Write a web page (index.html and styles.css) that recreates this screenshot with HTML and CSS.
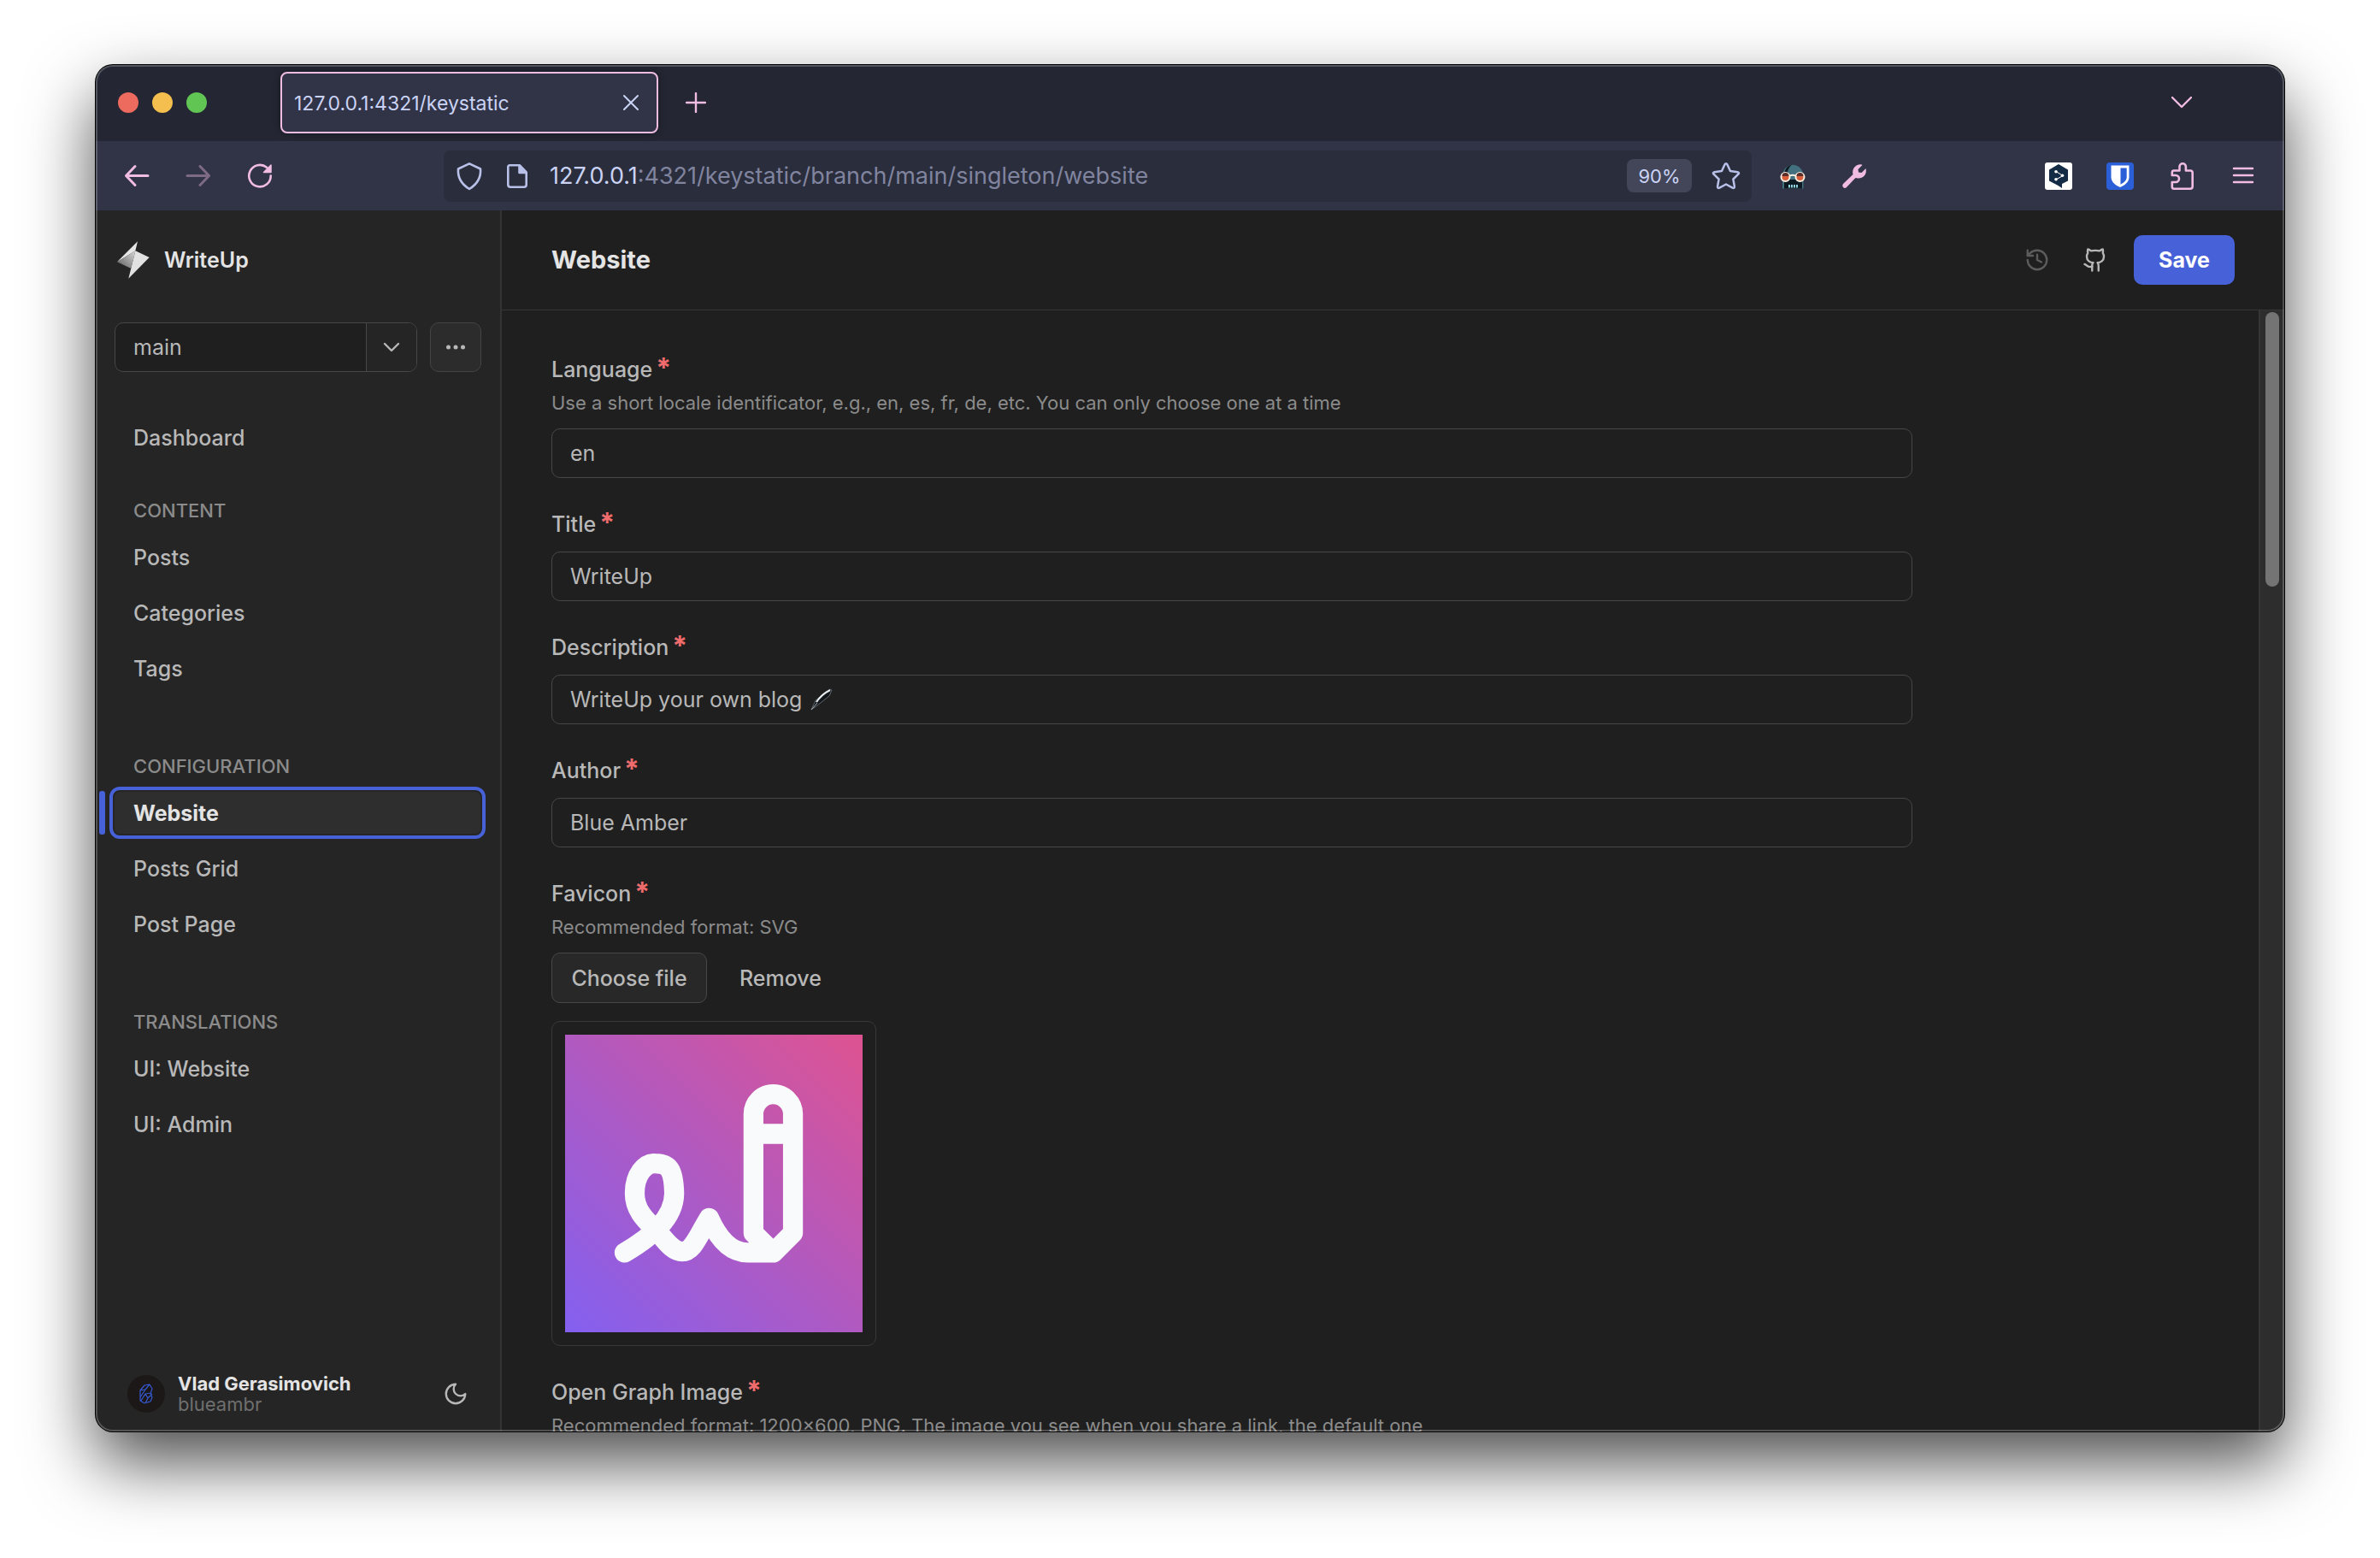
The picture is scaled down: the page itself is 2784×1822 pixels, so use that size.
FILE: index.html
```html
<!DOCTYPE html>
<html lang="en">
<head>
<meta charset="utf-8">
<title>Website - Keystatic</title>
<link rel="stylesheet" href="styles.css">
</head>
<body>
<div class="window">
  <header class="tabstrip">
    <div class="lights"><span class="light red"></span><span class="light yellow"></span><span class="light green"></span></div>
    <div class="tab">
      <span class="tab-title">127.0.0.1:4321/keystatic</span>
      <button class="plain" aria-label="Close tab"><svg width="20" height="20" viewBox="0 0 20 20" fill="none" stroke="#cad3f5" stroke-width="2" stroke-linecap="round"><path d="M2 2l16 16M18 2L2 18"/></svg></button>
    </div>
    <button class="plain pink new-tab" aria-label="New tab"><svg width="24" height="24" viewBox="0 0 24 24" fill="none" stroke="currentColor" stroke-width="2.4" stroke-linecap="round"><path d="M12 1v22M1 12h22"/></svg></button>
    <button class="plain pink tab-list" aria-label="List all tabs"><svg width="24" height="16" viewBox="0 0 24 16" fill="none" stroke="currentColor" stroke-width="2.4" stroke-linecap="round" stroke-linejoin="round"><path d="M1 2l11 11L23 2"/></svg></button>
  </header>

  <div class="toolbar">
    <div class="tools pink">
      <button class="plain" aria-label="Back"><svg width="32" height="32" viewBox="0 0 32 32" fill="none" stroke="currentColor" stroke-width="3" stroke-linecap="round" stroke-linejoin="round"><path d="M14 4.500L3.500 15.500l10.500 11M3.500 15.500h25.500"/></svg></button>
      <button class="plain dim" aria-label="Forward"><svg width="32" height="32" viewBox="0 0 32 32" fill="none" stroke="currentColor" stroke-width="3" stroke-linecap="round" stroke-linejoin="round"><path d="M18 4.500l10.500 11-10.500 11M28.500 15.500H3"/></svg></button>
      <button class="plain" aria-label="Reload"><svg width="32" height="32" viewBox="0 0 32 32" fill="none" stroke="currentColor" stroke-width="2.6" stroke-linecap="round"><path d="M28.700 15.500A12.700 12.700 0 1 1 24 5.800"/><path d="M29 3v8.500h-8.500z" fill="currentColor" stroke-width="1.500" stroke-linejoin="round"/></svg></button>
    </div>
    <div class="urlbar">
      <svg width="32" height="34" viewBox="0 0 32 34" fill="none" stroke="#b8c0e8" stroke-width="2.6" stroke-linejoin="round"><path d="M16 2.300L29 8.500c.8 9-2.500 17-13 23.500C5.500 25.500 2.200 17.500 3 8.500z"/></svg>
      <svg width="32" height="30" viewBox="-4 0 32 30" fill="none" stroke="#b8c0e8" stroke-width="2.600" stroke-linejoin="round"><path d="M4 2.300h12l7.700 8V25a2.700 2.700 0 0 1-2.700 2.700H5A2.700 2.700 0 0 1 2.300 25V4A1.700 1.700 0 0 1 4 2.300z"/><path d="M15.500 3v8H23z" fill="#b8c0e8"/></svg>
      <span class="url"><span class="host">127.0.0.1</span>:4321/keystatic/branch/main/singleton/website</span>
      <button class="zoom">90%</button>
      <button class="plain" aria-label="Bookmark"><svg width="34" height="34" viewBox="0 0 34 34" fill="none" stroke="#b8c0e8" stroke-width="2.500" stroke-linejoin="round"><path d="M15.500 3.500q1.500-2.500 3 0l3.500 7.600 8.500 1.100q2.500.6.900 2.500l-6 5.800 1.500 8.500q.1 2.600-2.300 1.600L17 26.500l-7.600 4.100q-2.400 1-2.300-1.600l1.500-8.500-6-5.800q-1.600-1.900.9-2.500l8.500-1.100z"/></svg></button>
    </div>
    <div class="tools">
      <button class="plain" aria-label="Skull extension"><svg width="32" height="32" viewBox="0 0 32 32"><path d="M4 30.500V15A12.300 13.500 0 0 1 28.500 15v15.500z" fill="#42707f"/><path d="M6.500 12C7.500 7 10 4 15 2.500c-4 4-5 7-5 10zM6 20h21v10.500H6z" fill="#0e1a22"/><circle cx="7.500" cy="17" r="5" fill="#d8603c" stroke="#fff1e4" stroke-width="2"/><circle cx="24.500" cy="17" r="5" fill="#d8603c" stroke="#fff1e4" stroke-width="2"/><path d="M3.500 16A4 4 0 0 1 11.500 16zM20.500 16a4 4 0 0 1 8 0z" fill="#5a2f2b"/><path d="M12.500 15.500q3.500-1.500 7 0" fill="none" stroke="#fff1e4" stroke-width="1.800"/><path d="M12 26v3.500M15 26v3.500M18 26v3.500M21 26v3.500" stroke="#8fd0dc" stroke-width="2"/></svg></button>
      <button class="plain pink" aria-label="Developer tools"><svg width="32" height="32" viewBox="0 0 32 32"><path d="M3 29a3 3 0 0 1 0-4L14.500 14C13 8 17 2 24 2.300l1.500.6-5 5 .5 3.500 3.500.5 5-5c1.800 6-2.500 12-9.500 11.500L17.500 18 7 29a3 3 0 0 1-4 0z" fill="currentColor"/></svg></button>
    </div>
    <div class="tools extensions">
      <button class="plain" aria-label="DeepL"><svg width="32" height="32" viewBox="0 0 32 32"><rect width="32" height="32" rx="3" fill="#fff"/><path d="M16 2l11 6.500v13L20 25v5l-4.500-3L5 21.500v-13z" fill="#142b45"/><path d="M13 10.500l8 5-8 4.500" fill="none" stroke="#fff" stroke-width="1"/><circle cx="13" cy="10.800" r="1.800" fill="#fff"/><circle cx="20.500" cy="15.300" r="1.800" fill="#fff"/><circle cx="13" cy="19.800" r="1.800" fill="#fff"/></svg></button>
      <button class="plain" aria-label="Bitwarden"><svg width="32" height="32" viewBox="0 0 32 32"><rect width="32" height="32" rx="4" fill="#2b5fd8"/><path d="M5.500 3.500h21V17c0 6-5 9.500-10.500 12C10.500 26.500 5.500 23 5.500 17z" fill="#fff"/><path d="M16.500 6.500h7.200V17c0 4-3.200 6.500-7.200 8.700z" fill="#2b5fd8"/></svg></button>
      <button class="plain pink" aria-label="Extensions"><svg width="32" height="32" viewBox="-1 0 32 32" fill="none" stroke="currentColor" stroke-width="2.600" stroke-linejoin="round"><path d="M5.500 9.500h7V5a3.700 3.700 0 0 1 7.400 0v4.500H25a2.700 2.700 0 0 1 2.700 2.700V28a2.700 2.700 0 0 1-2.700 2.700H6A2.200 2.200 0 0 1 3.800 28.500V23H8a4 4 0 0 0 0-8H3.800v-3.500a2 2 0 0 1 1.700-2z"/></svg></button>
      <button class="plain pink" aria-label="Menu"><svg width="32" height="32" viewBox="0 0 32 32" fill="none" stroke="currentColor" stroke-width="2.400" stroke-linecap="round"><path d="M5 7h22M5 15h22M5 23h22"/></svg></button>
    </div>
  </div>

  <div class="app">
    <aside class="sidebar">
      <a class="brand" href="#"><svg width="40" height="44" viewBox="50 336 116 132"><defs><linearGradient id="facet" x1="0" y1="1" x2="1" y2="0"><stop offset="0" stop-color="#5a5a5a"/><stop offset="1" stop-color="#d8d8d8"/></linearGradient></defs><path d="M123 337l-8 33-64 39z" fill="#e6e6e6"/><path d="M115 370l49 23-73 74z" fill="#e2e2e2"/><path d="M115 370l-15 62-49-23z" fill="url(#facet)"/></svg><span>WriteUp</span></a>
      <div class="branch">
        <div class="combo">
          <input class="combo-input" type="text" value="main" aria-label="Branch">
          <button class="combo-button" aria-label="Show branches"><svg width="20" height="12" viewBox="0 0 20 12" fill="none" stroke="currentColor" stroke-width="2.400" stroke-linecap="round" stroke-linejoin="round"><path d="M2 2l8 8 8-8"/></svg></button>
        </div>
        <button class="more" aria-label="Branch actions"><svg width="24" height="6" viewBox="0 0 24 6" fill="currentColor"><circle cx="3.500" cy="3" r="2.500"/><circle cx="12" cy="3" r="2.500"/><circle cx="20.500" cy="3" r="2.500"/></svg></button>
      </div>
      <nav class="nav">
        <a class="nav-item" href="#">Dashboard</a>
        <section class="nav-group first">
          <h2 class="nav-heading">CONTENT</h2>
          <a class="nav-item" href="#">Posts</a>
          <a class="nav-item" href="#">Categories</a>
          <a class="nav-item" href="#">Tags</a>
        </section>
        <section class="nav-group">
          <h2 class="nav-heading">CONFIGURATION</h2>
          <a class="nav-item current" href="#" aria-current="page">Website</a>
          <a class="nav-item" href="#">Posts Grid</a>
          <a class="nav-item" href="#">Post Page</a>
        </section>
        <section class="nav-group">
          <h2 class="nav-heading">TRANSLATIONS</h2>
          <a class="nav-item" href="#">UI: Website</a>
          <a class="nav-item" href="#">UI: Admin</a>
        </section>
      </nav>
      <footer class="user">
        <svg width="44" height="44" viewBox="0 0 44 44"><circle cx="22" cy="22" r="22" fill="#1b1817"/><path d="M15 18l5-6 6-1 3 5-2 6 2 4-2 5-7 2-5-3zM15 18l6-1 5-6M21 17l-6 9M16 30l5-8 6-1M21 22l3 5-3 6M24 27l5-5" fill="none" stroke="#3558d0" stroke-width="1.200" stroke-linejoin="round"/></svg>
        <div class="user-text"><strong class="user-name">Vlad Gerasimovich</strong><span class="user-login">blueambr</span></div>
        <button class="plain theme" aria-label="Theme"><svg width="30" height="30" viewBox="0 0 24 24" fill="none" stroke="currentColor" stroke-width="1.900" stroke-linecap="round" stroke-linejoin="round"><path d="M12 3a6 6 0 0 0 9 9 9 9 0 1 1-9-9z"/></svg></button>
      </footer>
    </aside>

    <main class="main">
      <header class="main-header">
        <h1 class="title">Website</h1>
        <button class="plain faded" aria-label="Reset"><svg width="30" height="30" viewBox="0 0 24 24" fill="none" stroke="currentColor" stroke-width="1.900" stroke-linecap="round" stroke-linejoin="round"><path d="M3 12a9 9 0 1 0 9-9 9.750 9.750 0 0 0-6.740 2.740L3 8"/><path d="M3 3v5h5M12 7v5l4 2"/></svg></button>
        <button class="plain github" aria-label="View on GitHub"><svg width="30" height="30" viewBox="0 0 24 24" fill="none" stroke="currentColor" stroke-width="1.900" stroke-linecap="round" stroke-linejoin="round"><path d="M15 22v-4a4.800 4.800 0 0 0-1-3.500c3 0 6-2 6-5.500.08-1.250-.27-2.480-1-3.500.28-1.150.28-2.350 0-3.500 0 0-1 0-3 1.500-2.640-.5-5.360-.5-8 0C6 2 5 2 5 2c-.3 1.150-.3 2.350 0 3.500A5.403 5.403 0 0 0 4 9c0 3.500 3 5.500 6 5.500-.39.490-.68 1.050-.85 1.650-.17.600-.22 1.230-.15 1.850v4"/><path d="M9 18c-4.510 2-5-2-7-2"/></svg></button>
        <button class="save">Save</button>
      </header>
      <div class="scroller">
        <form class="form">
          <div class="field">
            <div class="caption"><label for="language">Language<span class="star">*</span></label><p class="hint">Use a short locale identificator, e.g., en, es, fr, de, etc. You can only choose one at a time</p></div>
            <input class="input" id="language" type="text" value="en">
          </div>
          <div class="field">
            <div class="caption"><label for="title">Title<span class="star">*</span></label></div>
            <input class="input" id="title" type="text" value="WriteUp">
          </div>
          <div class="field">
            <div class="caption"><label for="description">Description<span class="star">*</span></label></div>
            <div class="input-wrap">
              <input class="input" id="description" type="text" value="WriteUp your own blog">
              <svg class="pen" width="28" height="28" viewBox="0 0 28 28"><path d="M2 26L7 15 24 2l2 1-3 7L9 21z" fill="#14181c" stroke="#5d646b" stroke-width="1"/><path d="M8 17Q14 8 24 3" fill="none" stroke="#e8eef2" stroke-width="2"/><path d="M2 26l7-8" stroke="#a9b0b5" stroke-width="1"/></svg>
            </div>
          </div>
          <div class="field">
            <div class="caption"><label for="author">Author<span class="star">*</span></label></div>
            <input class="input" id="author" type="text" value="Blue Amber">
          </div>
          <div class="field">
            <div class="caption"><label for="favicon">Favicon<span class="star">*</span></label><p class="hint">Recommended format: SVG</p></div>
            <div class="actions"><button class="choose" id="favicon" type="button">Choose file</button><button class="remove" type="button">Remove</button></div>
            <div class="preview">
              <svg viewBox="120 87 1047 1047"><defs><linearGradient id="bg" x1="0" y1="1" x2="1" y2="0"><stop offset="0" stop-color="#8360f0"/><stop offset="1" stop-color="#de5391"/></linearGradient></defs><rect x="120" y="87" width="1047" height="1047" fill="url(#bg)"/><path fill="none" stroke="#f9fafc" stroke-width="70" stroke-linecap="round" stroke-linejoin="round" d="M329 854C420 800 504 735 504 645C502 560 485 540 437 540C400 538 365 580 365 645C365 720 425 755 460 797C485 827 505 850 532 850C570 850 585 800 627 732C655 795 695 854 763 854H853L922 785V366A69.500 69.500 0 0 0 783 366V785L853 854M783 436H922"/></svg>
            </div>
          </div>
          <div class="field">
            <div class="caption"><label for="og">Open Graph Image<span class="star">*</span></label><p class="hint">Recommended format: 1200×600, PNG. The image you see when you share a link, the default one</p></div>
          </div>
        </form>
        <div class="track"><div class="thumb"></div></div>
      </div>
    </main>
  </div>
</div>
</body>
</html>
```

FILE: styles.css
```css
* { box-sizing: border-box; }

body {
  margin: 0;
  height: 100vh;
  padding: 76px 112px 148px;
  background: #fff;
  font-family: Inter, "Liberation Sans", sans-serif;
  font-size: 25px;
  line-height: 32px;
  color: #b8b8b8;
}

svg { display: block; flex: none; }
button, input { font: inherit; color: inherit; margin: 0; }
a { color: inherit; text-decoration: none; }
h1, h2, p { margin: 0; font-size: inherit; font-weight: inherit; }

.plain { display: flex; padding: 0; border: 0; background: none; }
.pink { color: #f0bce2; }
.dim { opacity: 0.4; }

.window {
  position: relative;
  display: flex;
  flex-direction: column;
  height: 100%;
  overflow: hidden;
  border-radius: 20px;
  background: #1f1f1f;
  box-shadow: 0 0 0 1px #000, 0 36px 80px rgba(0, 0, 0, 0.7);
}
.window::after {
  content: "";
  position: absolute;
  inset: 0;
  border-radius: 20px;
  box-shadow: inset 0 0 0 2px rgba(255, 255, 255, 0.22);
  pointer-events: none;
}

.tabstrip {
  display: flex;
  align-items: center;
  flex: none;
  height: 89px;
  padding: 0 108px 2px 26px;
  background: #242733;
}
.lights { display: flex; gap: 16px; }
.light { width: 24px; height: 24px; border-radius: 50%; }
.red { background: #ed6a5e; }
.yellow { background: #f5bf4f; }
.green { background: #61c554; }
.tab {
  display: flex;
  align-items: center;
  justify-content: space-between;
  width: 442px;
  height: 72px;
  margin: 0 32px 0 86px;
  padding: 0 20px 0 14px;
  border: 2px solid #f0bce2;
  border-radius: 8px;
  background: #313446;
  box-shadow: 0 0 8px rgba(0, 0, 0, 0.4);
  color: #cad3f5;
}
.tab-title { padding-top: 3px; font-size: 23px; }
.tab-list { margin-left: auto; }

.toolbar {
  display: flex;
  align-items: center;
  flex: none;
  height: 81px;
  padding: 0 32px;
  background: #313446;
}
.tools { display: flex; gap: 40px; }
.urlbar {
  display: flex;
  align-items: center;
  flex: 1;
  height: 60px;
  margin: 0 32px 0 199px;
  padding: 0 13px 0 14px;
  border-radius: 8px;
  background: #2a2d3c;
  gap: 23px;
}
.url { flex: 1; color: #80849f; font-size: 27px; }
.host { color: #cad3f5; }
.zoom {
  width: 76px;
  height: 39px;
  padding: 0;
  border: 0;
  border-radius: 8px;
  background: #434659;
  color: #cad3f5;
  font-size: 22px;
}
.extensions { margin-left: 207px; }

.app { display: flex; flex: 1; min-height: 0; }

.sidebar {
  display: flex;
  flex-direction: column;
  flex: none;
  width: 475px;
  border-right: 2px solid #333;
  background: #252525;
}
.brand {
  display: flex;
  align-items: center;
  height: 116px;
  padding-left: 24px;
  gap: 16px;
  color: #e4e4e4;
  font-weight: 600;
}
.branch { display: flex; gap: 15px; margin: 15px 22px 46px; }
.combo {
  display: flex;
  flex: 1;
  height: 58px;
  border: 1px solid #474747;
  border-radius: 10px;
  overflow: hidden;
  background: #1f1f1f;
}
.combo-input { flex: 1; min-width: 0; padding: 0 21px; border: 0; background: none; }
.combo-button {
  display: flex;
  align-items: center;
  justify-content: center;
  width: 59px;
  padding: 0;
  border: 0;
  border-left: 1px solid #474747;
  background: #252525;
}
.more {
  display: flex;
  align-items: center;
  justify-content: center;
  width: 60px;
  padding: 0;
  border: 1px solid #444;
  border-radius: 10px;
  background: #2c2c2c;
}

.nav { display: flex; flex-direction: column; font-weight: 500; }
.nav-group { display: flex; flex-direction: column; margin-top: 49px; }
.nav-group.first { margin-top: 20px; }
.nav-heading { height: 62px; padding: 15px 44px; color: #8b8b8b; font-size: 22px; }
.nav-heading + .nav-item { margin-top: -7px; }
.nav-item {
  position: relative;
  display: flex;
  align-items: center;
  height: 61px;
  margin: 0 17px 4px 16px;
  padding: 0 28px;
}
.nav-item.current {
  padding: 0 24px;
  border: 4px solid #4761d8;
  border-radius: 12px;
  background: #2e2e2e;
  box-shadow: inset 0 0 0 2px #252525;
  color: #e4e4e4;
  font-weight: 700;
}
.nav-item.current::before {
  content: "";
  position: absolute;
  top: 1px;
  bottom: 1px;
  left: -16px;
  width: 7px;
  border-radius: 3px;
  background: #4761d8;
}

.user {
  display: flex;
  align-items: center;
  margin-top: auto;
  padding: 0 37px 20px;
  gap: 15px;
  font-size: 22px;
  line-height: 24px;
}
.user-text { display: flex; flex: 1; flex-direction: column; }
.user-name { color: #e4e4e4; }
.user-login { color: #6f6f6f; }

.main { display: flex; flex: 1; flex-direction: column; min-width: 0; }
.main-header {
  display: flex;
  align-items: center;
  flex: none;
  height: 117px;
  padding: 0 58px;
  border-bottom: 1px solid #363636;
}
.title { flex: 1; color: #e4e4e4; font-size: 29px; font-weight: 700; }
.faded { color: #5c5c5c; }
.github { margin: 0 30px 0 38px; }
.save {
  width: 118px;
  height: 58px;
  padding: 0;
  border: 0;
  border-radius: 10px;
  background: #4761d8;
  color: #fff;
  font-weight: 700;
}

.scroller { display: flex; flex: 1; min-height: 0; overflow: hidden; }
.form {
  display: flex;
  flex: 1;
  flex-direction: column;
  min-width: 0;
  padding: 53px 58px 0;
  gap: 38px;
}
.field { display: flex; flex: none; flex-direction: column; max-width: 1592px; gap: 16px; }
.caption { display: flex; flex-direction: column; gap: 9px; font-weight: 500; }
.star {
  margin-left: 4px;
  color: #f06c6c;
  font-size: 32px;
  font-weight: 700;
  line-height: 0;
  vertical-align: -1px;
}
.hint { color: #8b8b8b; font-size: 22px; font-weight: 400; line-height: 28px; }
.input {
  display: block;
  width: 100%;
  height: 58px;
  padding: 0 21px;
  border: 1px solid #474747;
  border-radius: 10px;
  background: #1f1f1f;
}
.input-wrap { position: relative; }
.pen { position: absolute; top: 15px; left: 302px; }
.actions { display: flex; font-weight: 500; }
.choose {
  width: 182px;
  height: 59px;
  padding: 0;
  border: 1px solid #474747;
  border-radius: 10px;
  background: #282828;
}
.remove { padding: 0 38px; border: 0; background: none; }
.preview {
  width: 380px;
  margin-top: 5px;
  padding: 15px;
  border: 1px solid #383838;
  border-radius: 10px;
}
.preview svg { width: 100%; }
.track {
  flex: none;
  width: 30px;
  padding: 2px 6px;
  border-left: 2px solid #363636;
  background: #2d2d2d;
}
.thumb { width: 16px; height: 321px; border-radius: 8px; background: #747474; }
```
